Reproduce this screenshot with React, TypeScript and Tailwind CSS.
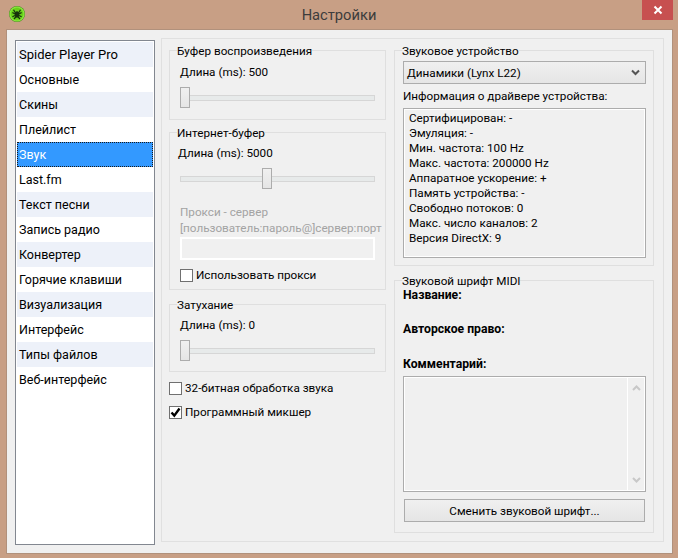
import React from "react";

const items = ["Spider Player Pro","Основные","Скины","Плейлист","Звук","Last.fm","Текст песни","Запись радио","Конвертер","Горячие клавиши","Визуализация","Интерфейс","Типы файлов","Веб-интерфейс"];
const info = ["Сертифицирован: -","Эмуляция: -","Мин. частота: 100 Hz","Макс. частота: 200000 Hz","Аппаратное ускорение: +","Память устройства: -","Свободно потоков: 0","Макс. число каналов: 2","Версия DirectX: 9"];

function Slider({ left }: { left: string }) {
  return (
    <div className="relative flex h-[21px] w-[195px] items-center">
      <div className="h-[6px] w-full border border-[#d6d6d6] bg-[#e7eaea]" />
      <div className={`absolute top-0 h-[21px] w-[10px] border border-[#acacac] bg-gradient-to-b from-[#f0f0f0] to-[#e5e5e5] ${left}`} />
    </div>
  );
}

function Check({ checked, label, className }: { checked?: boolean; label: string; className?: string }) {
  return (
    <div className={`flex items-center gap-[3px] ${className ?? ""}`}>
      <div className="flex h-[13px] w-[13px] items-center justify-center border border-[#707070] bg-white">
        {checked && (
          <svg width="11" height="11" viewBox="0 0 11 11"><path d="M1.5 5.5 L4.3 8.6 L9.5 1.5" fill="none" stroke="#000" strokeWidth="2.4" /></svg>
        )}
      </div>
      <span className="leading-4">{label}</span>
    </div>
  );
}

export default function App() {
  return (
    <div className="flex h-[558px] w-[678px] flex-col bg-[#c89f85] text-[12.5px] leading-4 text-black" style={{ fontFamily: 'Roboto, "Noto Sans", sans-serif' }}>
      <div className="relative flex h-[29px] shrink-0 items-center justify-center">
        <svg className="absolute left-[9px] top-[6px]" width="16" height="16" viewBox="0 0 16 16">
          <defs>
            <radialGradient id="g" cx="50%" cy="50%" r="50%">
              <stop offset="0%" stopColor="#6fd020" />
              <stop offset="70%" stopColor="#66d018" />
              <stop offset="88%" stopColor="#8ce840" />
              <stop offset="100%" stopColor="#3f8a18" />
            </radialGradient>
          </defs>
          <circle cx="8" cy="8" r="8" fill="url(#g)" />
          <ellipse cx="8" cy="8.5" rx="2.2" ry="3.2" fill="#16300c" />
          <path d="M6.5 7 L4.5 3.8 M9.5 7 L11.5 3.8 M6 8 L3.4 6.4 M10 8 L12.6 6.4 M6 9.5 L3.4 10.8 M10 9.5 L12.6 10.8 M6.8 11 L5 13 M9.2 11 L11 13" stroke="#16300c" strokeWidth="1.2" fill="none" />
        </svg>
        <span className="text-[14.7px] text-[#3c3c3c]">Настройки</span>
        <div className="absolute left-[642px] top-0 flex h-[20px] w-[31px] items-center justify-center bg-[#c75050]">
          <svg width="10" height="10" viewBox="0 0 10 10"><path d="M1.5 1.5 L8.5 8.5 M8.5 1.5 L1.5 8.5" stroke="#fff" strokeWidth="2" /></svg>
        </div>
      </div>

      <div className="ml-[6px] flex h-[525px] w-[667px] items-start gap-[6px] border border-[#b1917c] bg-[#f0f0f0] pl-[8px]">
        <div className="mt-[10px] h-[505px] w-[140px] shrink-0 border border-[#828790] bg-white p-[1px] pt-[1px]">
          {items.map((t, i) => (
            <div
              key={t}
              className={
                i === 4
                  ? "flex h-[25px] items-center border border-dotted border-[#1a1a1a] bg-[#3399ff] pl-[1px] text-white"
                  : i === 0
                  ? "flex h-[25px] items-center bg-[#edf1f9] pl-[2px] text-[13px]"
                  : `flex h-[25px] items-center pl-[2px] ${i % 2 === 0 ? "bg-[#edf1f9]" : "bg-white"}`
              }
            >
              {t}
            </div>
          ))}
        </div>

        <div className="mt-[8px] flex h-[504px] w-[503px] shrink-0 gap-[8px] border border-[#e0e0e0] pl-[7px] pt-[3px] text-[11.7px]">
          <div className="flex w-[217px] shrink-0 flex-col">
            <fieldset className="h-[78px] min-w-0 border border-[#dfdfdf] pl-[10px]">
              <legend className="-ml-[3px] h-4 leading-[18px]">Буфер воспроизведения</legend>
              <div className="mt-[6px]">Длина (ms): 500</div>
              <div className="mt-[7px]"><Slider left="left-0" /></div>
            </fieldset>

            <fieldset className="mt-[4px] h-[166px] min-w-0 border border-[#dfdfdf] pl-[10px]">
              <legend className="-ml-[3px] h-4 leading-[18px]">Интернет-буфер</legend>
              <div className="-ml-[2px] mt-[5px]">Длина (ms): 5000</div>
              <div className="mt-[7px]"><Slider left="left-[82px]" /></div>
              <div className="mt-[15px] text-[#a3a3a3]">Прокси - сервер</div>
              <div className="whitespace-nowrap text-[#a3a3a3]">[пользователь:пароль@]сервер:порт</div>
              <div className="mt-[1px] h-[23px] w-[195px] border-2 border-white bg-[#f0f0f0]" />
              <Check label="Использовать прокси" className="mt-[7px]" />
            </fieldset>

            <fieldset className="mt-[6px] h-[76px] min-w-0 border border-[#dfdfdf] pl-[10px]">
              <legend className="-ml-[3px] h-4 leading-[18px]">Затухание</legend>
              <div className="mt-[5px]">Длина (ms): 0</div>
              <div className="mt-[7px]"><Slider left="left-0" /></div>
            </fieldset>

            <Check label="32-битная обработка звука" className="mt-[8px]" />
            <Check checked label="Программный микшер" className="mt-[8px]" />
          </div>

          <div className="flex w-[260px] shrink-0 flex-col">
            <fieldset className="h-[224px] min-w-0 border border-[#dfdfdf] pl-[8px]">
              <legend className="-ml-[1px] h-4 leading-[18px]">Звуковое устройство</legend>
              <div className="mt-[3px] flex h-[23px] w-[243px] items-center justify-between border border-[#acacac] bg-gradient-to-b from-[#f0f0f0] to-[#e5e5e5] pl-[3px] pr-[5px]">
                <span>Динамики (Lynx L22)</span>
                <svg width="9" height="7" viewBox="0 0 9 7"><path d="M1 1.5 L4.5 5 L8 1.5" fill="none" stroke="#555" strokeWidth="2" /></svg>
              </div>
              <div className="mt-[4px]">Информация о драйвере устройства:</div>
              <div className="mt-[4px] h-[150px] w-[243px] border border-[#acacac] bg-[#f0f0f0] px-[5px] pt-[2px] shadow-[inset_0_0_0_1px_#ffffff]">
                {info.map((t) => (
                  <div key={t} className="h-[15px] leading-[15px]">{t}</div>
                ))}
              </div>
            </fieldset>

            <fieldset className="mt-[6px] h-[261px] min-w-0 border border-[#dfdfdf] pl-[8px]">
              <legend className="-ml-[1px] h-4 leading-[18px]">Звуковой шрифт MIDI</legend>
              <div className="-mt-[1px] h-[34px] text-[12.2px] font-bold">Название:</div>
              <div className="h-[35px] text-[12.2px] font-bold">Авторское право:</div>
              <div className="h-[20px] text-[12.2px] font-bold">Комментарий:</div>
              <div className="flex h-[116px] w-[243px] justify-end border border-[#acacac] bg-[#f0f0f0] shadow-[inset_0_0_0_1px_#ffffff]">
                <div className="m-[1px] flex w-[17px] flex-col items-center justify-between border-l border-white py-[7px]">
                  <svg width="9" height="6" viewBox="0 0 9 6"><path d="M1 5 L4.5 1.5 L8 5" fill="none" stroke="#c8c8c8" strokeWidth="2" /></svg>
                  <svg width="9" height="6" viewBox="0 0 9 6"><path d="M1 1 L4.5 4.5 L8 1" fill="none" stroke="#c8c8c8" strokeWidth="2" /></svg>
                </div>
              </div>
              <div className="ml-[1px] mt-[7px] flex h-[23px] w-[241px] items-center justify-center border border-[#acacac] bg-gradient-to-b from-[#f0f0f0] to-[#e5e5e5]">
                Сменить звуковой шрифт...
              </div>
            </fieldset>
          </div>
        </div>
      </div>
    </div>
  );
}
